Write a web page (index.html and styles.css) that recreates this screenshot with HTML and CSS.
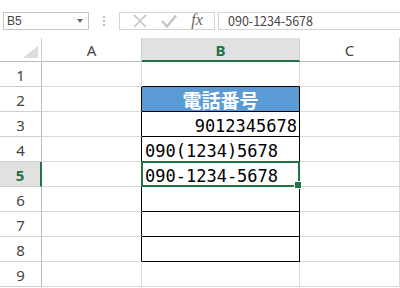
FILE: index.html
```html
<!DOCTYPE html>
<html lang="ja">
<head>
<meta charset="utf-8">
<link rel="stylesheet" href="styles.css">
</head>
<body>
<div class="app">
  <div class="toolbar">
    <div class="namebox">
      <span class="name">B5</span>
      <span class="caret"></span>
    </div>
    <div class="grip"><i></i><i></i><i></i></div>
    <div class="fbtns">
      <svg class="ico" width="14" height="14" viewBox="0 0 14 14"><path d="M1 1 L13 13 M13 1 L1 13" stroke="#c4c4c4" stroke-width="1.6" fill="none"/></svg>
      <svg class="ico" width="16" height="14" viewBox="0 0 16 14"><path d="M1 7 L6 12.5 L15 1.5" stroke="#c4c4c4" stroke-width="2.4" fill="none"/></svg>
      <span class="fx">fx</span>
    </div>
    <div class="finput">090-1234-5678</div>
  </div>
  <div class="sheet">
    <div class="hd corner"><span class="tri"></span></div>
    <div class="hd col">A</div>
    <div class="hd col sel">B</div>
    <div class="hd col">C</div>

    <div class="hd row">1</div>
    <div class="c"></div><div class="c bt"></div><div class="c"></div>

    <div class="hd row">2</div>
    <div class="c bl"></div><div class="c b title">電話番号</div><div class="c"></div>

    <div class="hd row">3</div>
    <div class="c bl"></div><div class="c b mono num">9012345678</div><div class="c"></div>

    <div class="hd row">4</div>
    <div class="c bl"></div><div class="c b mono txt">090(1234)5678</div><div class="c"></div>

    <div class="hd row rsel">5</div>
    <div class="c bl"></div><div class="c b mono txt active">090-1234-5678</div><div class="c"></div>

    <div class="hd row">6</div>
    <div class="c bl"></div><div class="c b"></div><div class="c"></div>

    <div class="hd row">7</div>
    <div class="c bl"></div><div class="c b"></div><div class="c"></div>

    <div class="hd row">8</div>
    <div class="c bl"></div><div class="c b"></div><div class="c"></div>

    <div class="hd row">9</div>
    <div class="c"></div><div class="c"></div><div class="c"></div>
  </div>
</div>
</body>
</html>
```
FILE: styles.css
```css
* { box-sizing: border-box; }
html, body { margin: 0; padding: 0; background: #fff; }
body { width: 400px; height: 288px; overflow: hidden; font-family: "Noto Sans", "Liberation Sans", sans-serif; }

.app { width: 400px; }

.toolbar {
  height: 38px;
  display: flex;
  align-items: flex-start;
  padding-top: 12px;
  padding-left: 3px;
}
.namebox {
  width: 86px;
  height: 18px;
  border: 1px solid #c6c6c6;
  display: flex;
  align-items: center;
  justify-content: space-between;
  padding: 0 5px 0 3px;
  font-size: 12px;
  color: #444;
}
.name { font-family: "Liberation Sans", sans-serif; }
.caret {
  width: 0; height: 0;
  border-left: 3.5px solid transparent;
  border-right: 3.5px solid transparent;
  border-top: 4px solid #666;
}
.grip {
  width: 30px;
  height: 18px;
  display: flex;
  flex-direction: column;
  align-items: center;
  justify-content: center;
  gap: 2px;
}
.grip i { display: block; width: 2px; height: 2px; background: #bbb; }
.fbtns {
  width: 96px;
  height: 18px;
  border: 1px solid #d4d4d4;
  display: flex;
  align-items: center;
  justify-content: space-around;
  padding: 0 4px 0 6px;
}
.fx {
  font-family: "Liberation Serif", serif;
  font-style: italic;
  font-size: 16px;
  color: #666;
  line-height: 16px;
  margin-top: -2px;
}
.finput {
  flex: 1;
  height: 18px;
  margin-left: 3px;
  border: 1px solid #d4d4d4;
  border-right: none;
  padding-left: 9px;
  font-family: "Noto Sans CJK JP", "Noto Sans", sans-serif;
  font-size: 12.5px;
  line-height: 16px;
  color: #444;
}

.sheet {
  display: grid;
  grid-template-columns: 42px 100px 158px 100px;
  grid-template-rows: 24px repeat(9, 25px);
}
.hd {
  background: #fff;
  border-right: 1px solid #d0d0d0;
  border-bottom: 1px solid #d0d0d0;
  color: #444;
  display: flex;
  align-items: center;
  justify-content: center;
  font-family: "Noto Sans", sans-serif;
  font-size: 15px;
}
.hd.corner { justify-content: flex-end; align-items: flex-end; padding: 0 3px 3px 0; border-bottom-color: #bcbcbc; }
.tri {
  width: 0; height: 0;
  border-left: 15px solid transparent;
  border-bottom: 12px solid #dcdcdc;
}
.hd.col { border-bottom-color: #bcbcbc; padding-top: 1px; }
.hd.sel {
  background: #e1e1e1;
  color: #217346;
  font-weight: bold;
  border-bottom: 2px solid #217346;
}
.hd.row { border-right-color: #bcbcbc; padding-top: 2px; }
.hd.rsel {
  background: #e1e1e1;
  color: #217346;
  font-weight: bold;
  border-right: 2px solid #217346;
}

.c {
  border-right: 1px solid #d9d9d9;
  border-bottom: 1px solid #d9d9d9;
  font-family: "Noto Sans CJK JP", sans-serif;
  font-size: 18px;
  color: #000;
  display: flex;
  align-items: center;
  white-space: nowrap;
}
.c.bt { border-bottom-color: #000; }
.c.bl { border-right-color: #000; }
.c.b { border-right-color: #000; border-bottom-color: #000; }
.title {
  background: #5b9bd5;
  color: #fff;
  font-weight: bold;
  justify-content: center;
  font-size: 19px;
}
.mono {
  font-family: "DejaVu Sans Mono", monospace;
  font-size: 17px;
  line-height: 17px;
  align-items: flex-end;
  padding-bottom: 1px;
}
.num { justify-content: flex-end; padding-right: 2px; }
.txt { padding-left: 3px; }
.active { position: relative; }
.active::before {
  content: "";
  position: absolute;
  left: -1px; top: -1px; right: -1px; bottom: -1px;
  border: 2px solid #217346;
}
.active::after {
  content: "";
  position: absolute;
  right: -3px; bottom: -3px;
  width: 6px; height: 6px;
  background: #217346;
  border: 1px solid #fff;
}
```
